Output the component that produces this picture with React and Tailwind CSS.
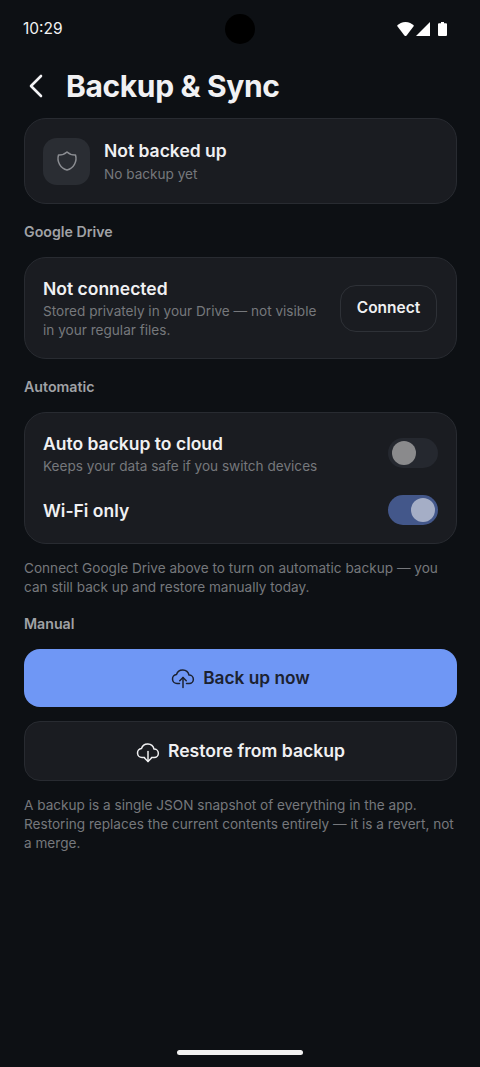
const heading = "font-['Inter',sans-serif]";
const body = "font-['Inter',sans-serif]";

// cloud outline shared by both action buttons, gap at the bottom for the arrow
function CloudIcon({ down }) {
  return (
    <svg width="24" height="24" viewBox="0 0 24 24" fill="none" stroke="currentColor" strokeWidth="1.5" strokeLinecap="round" strokeLinejoin="round">
      <path d="M8.5 17.5H6a4.5 4.5 0 0 1-.5-8.97 6.5 6.5 0 0 1 12.5.47 4.25 4.25 0 0 1 .2 8.5H15.5" />
      <path d="M12 11.5V21.5" />
      {down ? <path d="m8.75 18.25 3.25 3.25 3.25-3.25" /> : <path d="m8.75 14.75 3.25-3.25 3.25 3.25" />}
    </svg>
  );
}

function Toggle({ on, className }) {
  return (
    <div
      className={`flex h-[30px] w-[50px] items-center rounded-full px-[3.5px] ${
        on ? "justify-end bg-[#43578a]" : "justify-start bg-[#25282f]"
      } ${className}`}
    >
      <div className={`h-6 w-6 rounded-full ${on ? "bg-[#a5aec6]" : "bg-[#8a8a8c]"}`} />
    </div>
  );
}

function SectionLabel({ children, className }) {
  return (
    <div className={`${heading} text-[14.2px] font-semibold leading-5 text-[#a0a2a6] ${className}`}>
      {children}
    </div>
  );
}

function Note({ children, className }) {
  return <p className={`${body} text-[13.6px] leading-[19px] text-[#76787c] ${className}`}>{children}</p>;
}

export default function App() {
  return (
    <div className={`flex h-[1067px] w-[480px] flex-col overflow-hidden bg-[#0d1014] ${body}`}>
      {/* Status bar */}
      <div className="grid h-[58px] shrink-0 grid-cols-3 items-center px-[23px]">
        <span className="text-[15.5px] leading-none text-[#f2f2f2]">10:29</span>
        <div className="h-[30px] w-[30px] justify-self-center rounded-full bg-black" />
        <div className="mr-[10px] flex items-center justify-self-end">
          <svg width="17" height="14" viewBox="0 0 17 14" fill="#fff">
            <path d="M0 3.8C2.2 1.4 5.2 0 8.5 0s6.3 1.4 8.5 3.8L9.6 13.4a1.4 1.4 0 0 1-2.2 0z" />
          </svg>
          <svg width="14" height="14" viewBox="0 0 14 14" fill="#fff" className="ml-[2px]">
            <path d="M14 0v14H0z" />
          </svg>
          <svg width="9" height="14" viewBox="0 0 9 14" fill="#fff" className="ml-2">
            <path d="M3 0h3v1.3h2a1 1 0 0 1 1 1V13a1 1 0 0 1-1 1H1a1 1 0 0 1-1-1V2.3a1 1 0 0 1 1-1h2z" />
          </svg>
        </div>
      </div>

      {/* Header */}
      <div className="flex h-[56px] shrink-0 items-center pl-[28px]">
        <svg width="15" height="24" viewBox="0 0 15 24" fill="none" stroke="#f2f2f4" strokeWidth="2.6" strokeLinecap="round" strokeLinejoin="round">
          <path d="M13 2 3 12l10 10" />
        </svg>
        <h1 className={`${heading} ml-[23px] text-[30px] font-bold leading-none tracking-[-0.37px] text-[#f1f1f3]`}>
          Backup &amp; Sync
        </h1>
      </div>

      <div className="mt-1 flex flex-1 flex-col pl-6 pr-[23px]">
        {/* Status card */}
        <div className="flex h-[86px] items-center gap-[14px] rounded-[22px] border border-[#282b31] bg-[#1a1c21] px-[18px]">
          <div className="flex h-[47px] w-[47px] items-center justify-center rounded-[14px] bg-[#2a2d33]">
            <svg width="24" height="24" viewBox="0 0 24 24" fill="none" stroke="#8b8d92" strokeWidth="1.5" strokeLinecap="round" strokeLinejoin="round">
              <path d="M12 3a12 12 0 0 0 8.5 3a12 12 0 0 1 -8.5 15a12 12 0 0 1 -8.5 -15a12 12 0 0 0 8.5 -3" />
            </svg>
          </div>
          <div>
            <div className={`${heading} text-[17.5px] font-semibold leading-[24px] text-[#f0f0f2]`}>Not backed up</div>
            <div className="mt-[1px] text-[13.6px] leading-[20px] text-[#76787c]">No backup yet</div>
          </div>
        </div>

        <SectionLabel className="mt-[18px]">Google Drive</SectionLabel>

        {/* Drive card */}
        <div className="mt-[15px] flex h-[102px] items-center justify-between rounded-[22px] border border-[#282b31] bg-[#1a1c21] pl-[18px] pr-[19px]">
          <div className="w-[280px]">
            <div className={`${heading} text-[17.5px] font-semibold leading-[24px] text-[#f0f0f2]`}>Not connected</div>
            <div className="mt-[1px] text-[13.6px] leading-[19px] text-[#76787c]">
              Stored privately in your Drive — not visible in your regular files.
            </div>
          </div>
          <div className={`${heading} flex h-[47px] w-[97px] items-center justify-center rounded-[16px] border border-[#2e3137] text-[15.5px] font-semibold text-[#f0f0f2]`}>
            Connect
          </div>
        </div>

        <SectionLabel className="mt-[18px]">Automatic</SectionLabel>

        {/* Automatic card */}
        <div className="mt-[15px] flex h-[132px] flex-col justify-between rounded-[22px] border border-[#282b31] bg-[#1a1c21] pb-[18px] pl-[18px] pr-[18px] pt-[19px]">
          <div className="flex items-start justify-between">
            <div>
              <div className={`${heading} text-[17.5px] font-semibold leading-[24px] text-[#f0f0f2]`}>Auto backup to cloud</div>
              <div className="text-[13.6px] leading-[20px] text-[#76787c]">Keeps your data safe if you switch devices</div>
            </div>
            <Toggle className="mt-[6px]" />
          </div>
          <div className="flex items-center justify-between">
            <div className={`${heading} pt-px text-[17.5px] font-semibold leading-[24px] text-[#f0f0f2]`}>Wi-Fi only</div>
            <Toggle on />
          </div>
        </div>

        <Note className="mt-[15px]">
          Connect Google Drive above to turn on automatic backup — you can still back up and restore manually today.
        </Note>

        <SectionLabel className="mt-[17px]">Manual</SectionLabel>

        {/* Actions */}
        <button className={`${heading} mt-[15px] flex h-[58px] items-center justify-center gap-2 rounded-[16px] bg-[#6f97f5] text-[17.3px] font-semibold text-[#1c2230]`}>
          <CloudIcon />
          Back up now
        </button>
        <button className={`${heading} mt-[14px] flex h-[60px] items-center justify-center gap-2 rounded-[16px] border border-[#282b31] bg-[#1a1c21] pt-px text-[17.6px] font-semibold text-[#f0f0f2]`}>
          <CloudIcon down />
          Restore from backup
        </button>

        <Note className="mt-[15px]">
          A backup is a single JSON snapshot of everything in the app. Restoring replaces the current contents entirely — it is a revert, not a merge.
        </Note>
      </div>

      {/* Home indicator */}
      <div className="flex h-[17px] shrink-0 justify-center">
        <div className="h-[5px] w-[126px] rounded-full bg-[#f2f2f2]" />
      </div>
    </div>
  );
}
